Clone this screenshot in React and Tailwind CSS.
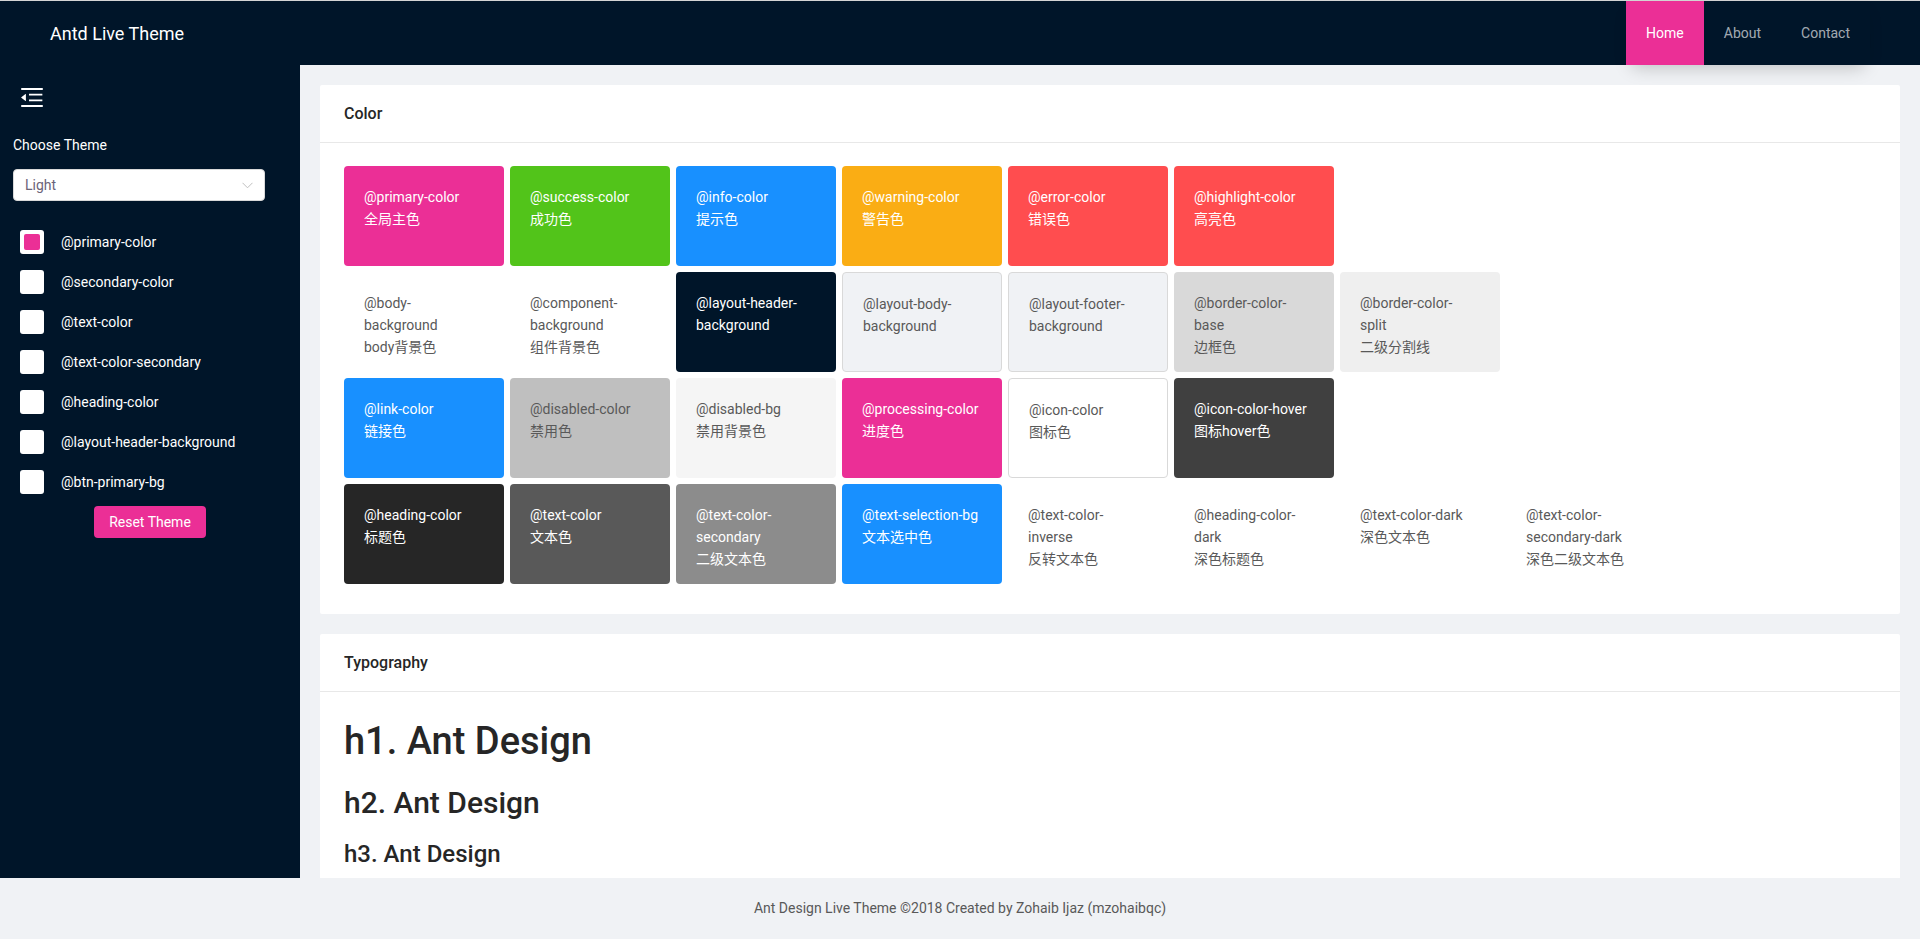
import React from "react";

const W = "text-white";
const G = "text-[#595959]";

const rows = [
  [
    { l: ["@primary-color"], c: "全局主色", bg: "bg-[#eb2f96]", t: W },
    { l: ["@success-color"], c: "成功色", bg: "bg-[#52c41a]", t: W },
    { l: ["@info-color"], c: "提示色", bg: "bg-[#1890ff]", t: W },
    { l: ["@warning-color"], c: "警告色", bg: "bg-[#faad14]", t: W },
    { l: ["@error-color"], c: "错误色", bg: "bg-[#ff4d4f]", t: W },
    { l: ["@highlight-color"], c: "高亮色", bg: "bg-[#ff4d4f]", t: W },
  ],
  [
    { l: ["@body-", "background"], c: "body背景色", bg: "bg-white", t: G },
    { l: ["@component-", "background"], c: "组件背景色", bg: "bg-white", t: G },
    { l: ["@layout-header-", "background"], c: "", bg: "bg-[#001529]", t: W },
    { l: ["@layout-body-", "background"], c: "", bg: "bg-[#f0f2f5]", t: G, b: true },
    { l: ["@layout-footer-", "background"], c: "", bg: "bg-[#f0f2f5]", t: G, b: true },
    { l: ["@border-color-", "base"], c: "边框色", bg: "bg-[#d9d9d9]", t: G },
    { l: ["@border-color-", "split"], c: "二级分割线", bg: "bg-[#efefef]", t: G },
  ],
  [
    { l: ["@link-color"], c: "链接色", bg: "bg-[#1890ff]", t: W },
    { l: ["@disabled-color"], c: "禁用色", bg: "bg-[#bfbfbf]", t: G },
    { l: ["@disabled-bg"], c: "禁用背景色", bg: "bg-[#f5f5f5]", t: G },
    { l: ["@processing-color"], c: "进度色", bg: "bg-[#eb2f96]", t: W },
    { l: ["@icon-color"], c: "图标色", bg: "bg-white", t: G, b: true },
    { l: ["@icon-color-hover"], c: "图标hover色", bg: "bg-[#404040]", t: W },
  ],
  [
    { l: ["@heading-color"], c: "标题色", bg: "bg-[#262626]", t: W },
    { l: ["@text-color"], c: "文本色", bg: "bg-[#595959]", t: W },
    { l: ["@text-color-", "secondary"], c: "二级文本色", bg: "bg-[#8c8c8c]", t: W },
    { l: ["@text-selection-bg"], c: "文本选中色", bg: "bg-[#1890ff]", t: W },
    { l: ["@text-color-", "inverse"], c: "反转文本色", bg: "bg-white", t: G },
    { l: ["@heading-color-", "dark"], c: "深色标题色", bg: "bg-white", t: G },
    { l: ["@text-color-dark"], c: "深色文本色", bg: "bg-white", t: G },
    { l: ["@text-color-", "secondary-dark"], c: "深色二级文本色", bg: "bg-white", t: G },
  ],
];

const sideVars = [
  "@primary-color",
  "@secondary-color",
  "@text-color",
  "@text-color-secondary",
  "@heading-color",
  "@layout-header-background",
  "@btn-primary-bg",
];

function FoldIcon() {
  return (
    <svg viewBox="112 160 800 704" width="22" height="19" fill="white">
      <path d="M408 442h480c4.4 0 8-3.6 8-8v-56c0-4.4-3.6-8-8-8H408c-4.4 0-8 3.6-8 8v56c0 4.4 3.6 8 8 8zm-8 204c0 4.4 3.6 8 8 8h480c4.4 0 8-3.6 8-8v-56c0-4.4-3.6-8-8-8H408c-4.4 0-8 3.6-8 8v56zm504-486H120c-4.4 0-8 3.6-8 8v56c0 4.4 3.6 8 8 8h784c4.4 0 8-3.6 8-8v-56c0-4.4-3.6-8-8-8zm0 632H120c-4.4 0-8 3.6-8 8v56c0 4.4 3.6 8 8 8h784c4.4 0 8-3.6 8-8v-56c0-4.4-3.6-8-8-8zM115.4 518.9L271.7 642c5.8 4.6 14.4.5 14.4-6.9V388.9c0-7.4-8.5-11.5-14.4-6.9L115.4 505.1a8.74 8.74 0 000 13.8z" />
    </svg>
  );
}

function Tile({ t }) {
  return (
    <div
      className={`w-[160px] h-[100px] shrink-0 rounded-[4px] mr-[6px] mb-[6px] px-5 pt-5 text-[14px] leading-[22px] ${t.bg} ${t.t} ${
        t.b ? "border border-[#d9d9d9]" : ""
      }`}
    >
      {t.l.map((x, i) => (
        <div key={i} className="whitespace-nowrap">
          {x}
        </div>
      ))}
      {t.c && <div className="whitespace-nowrap">{t.c}</div>}
    </div>
  );
}

function Card({ title, children, bodyClass = "p-6" }) {
  return (
    <div className="bg-white rounded-[2px] mb-5">
      <div className="h-[58px] border-b border-[#e8e8e8] px-6 flex items-center text-[16px] font-medium text-[#262626]">
        {title}
      </div>
      <div className={bodyClass}>{children}</div>
    </div>
  );
}

const extraSections = [
  "Buttons",
  "Inputs",
  "Select",
  "Checkbox & Radio",
  "Switch",
  "Slider",
  "Tabs",
  "Menu",
  "Table",
  "Alert",
  "Tag",
  "Pagination",
  "Steps",
  "Progress",
];

export default function App() {
  return (
    <div className="h-screen flex flex-col overflow-hidden font-['Roboto','Noto_Sans_CJK_SC',sans-serif]">
      <div className="h-px bg-[#d4d4d4] shrink-0" />
      <header className="relative z-10 h-16 shrink-0 bg-[#001529] flex items-center justify-between pl-[50px] pr-[50px]">
        <div className="text-white text-[18px]">Antd Live Theme</div>
        <ul className="flex h-16 shadow-[0_8px_18px_-6px_rgba(0,0,0,0.22)]">
          <li className="h-16 px-5 flex items-center bg-[#eb2f96] text-white text-[14px]">Home</li>
          <li className="h-16 px-5 flex items-center text-[rgba(255,255,255,0.65)] text-[14px]">About</li>
          <li className="h-16 px-5 flex items-center text-[rgba(255,255,255,0.65)] text-[14px]">Contact</li>
        </ul>
      </header>

      <div className="flex-1 min-h-0 flex">
        <aside className="w-[300px] shrink-0 bg-[#001529] pl-[13px] pt-[23px]">
          <div className="ml-[8px] h-[19px]">
            <FoldIcon />
          </div>
          <div className="mt-[28px] text-white text-[14px] leading-[21px]">Choose Theme</div>
          <div className="mt-[13px] w-[252px] h-[32px] bg-white border border-[#d9d9d9] rounded-[4px] flex items-center justify-between pl-[11px] pr-[11px]">
            <span className="text-[14px] text-[#6b6378]">Light</span>
            <svg width="11" height="7" viewBox="0 0 11 7" fill="none">
              <path d="M0.5 0.8L5.5 5.8L10.5 0.8" stroke="#bfbfbf" strokeWidth="1" />
            </svg>
          </div>
          <div className="mt-[29px] pl-[7px] flex flex-col gap-4">
            {sideVars.map((v, i) => (
              <div key={v} className="flex items-center h-6">
                <div className="w-6 h-6 bg-white rounded-[3px] flex items-center justify-center shrink-0">
                  {i === 0 && <div className="w-4 h-4 bg-[#eb2f96] rounded-[2px]" />}
                </div>
                <span className="ml-[17px] text-white text-[14px]">{v}</span>
              </div>
            ))}
          </div>
          <div className="mt-[12px] flex justify-center pr-[13px]">
            <button className="w-[112px] h-8 bg-[#eb2f96] text-white text-[14px] rounded-[4px]">Reset Theme</button>
          </div>
        </aside>

        <main className="flex-1 min-w-0 overflow-y-scroll bg-[#f0f2f5] p-5 [&::-webkit-scrollbar]:w-[10px] [&::-webkit-scrollbar-track]:bg-[#e8e8e8] [&::-webkit-scrollbar-thumb]:bg-[#7d7d7d] [&::-webkit-scrollbar-thumb]:rounded-[5px]">
          <Card title="Color" bodyClass="px-6 pt-[23px] pb-6">
            {rows.map((r, i) => (
              <div key={i} className="flex">
                {r.map((t, j) => (
                  <Tile key={j} t={t} />
                ))}
              </div>
            ))}
          </Card>

          <Card title="Typography" bodyClass="px-6 pt-[26px] pb-6">
            <h1 className="text-[38px] leading-[1.23] font-medium text-[#262626] mb-[18px]">h1. Ant Design</h1>
            <h2 className="text-[30px] leading-[1.35] font-medium text-[#262626] mb-[15px]">h2. Ant Design</h2>
            <h3 className="text-[24px] leading-[1.35] font-medium text-[#262626] mb-[12px]">h3. Ant Design</h3>
            <h4 className="text-[20px] leading-[1.4] font-medium text-[#262626] mb-[10px]">h4. Ant Design</h4>
            <p className="text-[14px] leading-[22px] text-[#595959] mb-4">
              Ant Design, a design language for background applications, is refined by Ant UED Team. Ant Design
              aims to uniform the user interface specs for internal background projects, lower the unnecessary cost
              of design differences and implementation and liberate the resources of design and front-end development.
            </p>
            <p className="text-[14px] leading-[22px] text-[#8c8c8c]">Secondary text · Disabled text · Link text</p>
          </Card>

          {extraSections.map((s) => (
            <Card key={s} title={s}>
              <div className="h-[900px] text-[14px] leading-[22px] text-[#595959]">{s} examples</div>
            </Card>
          ))}
        </main>
      </div>

      <footer className="h-[61px] shrink-0 bg-[#f0f2f5] py-5 text-center text-[14px] leading-[21px] text-[#595959]">
        Ant Design Live Theme ©2018 Created by Zohaib Ijaz (mzohaibqc)
      </footer>
    </div>
  );
}
